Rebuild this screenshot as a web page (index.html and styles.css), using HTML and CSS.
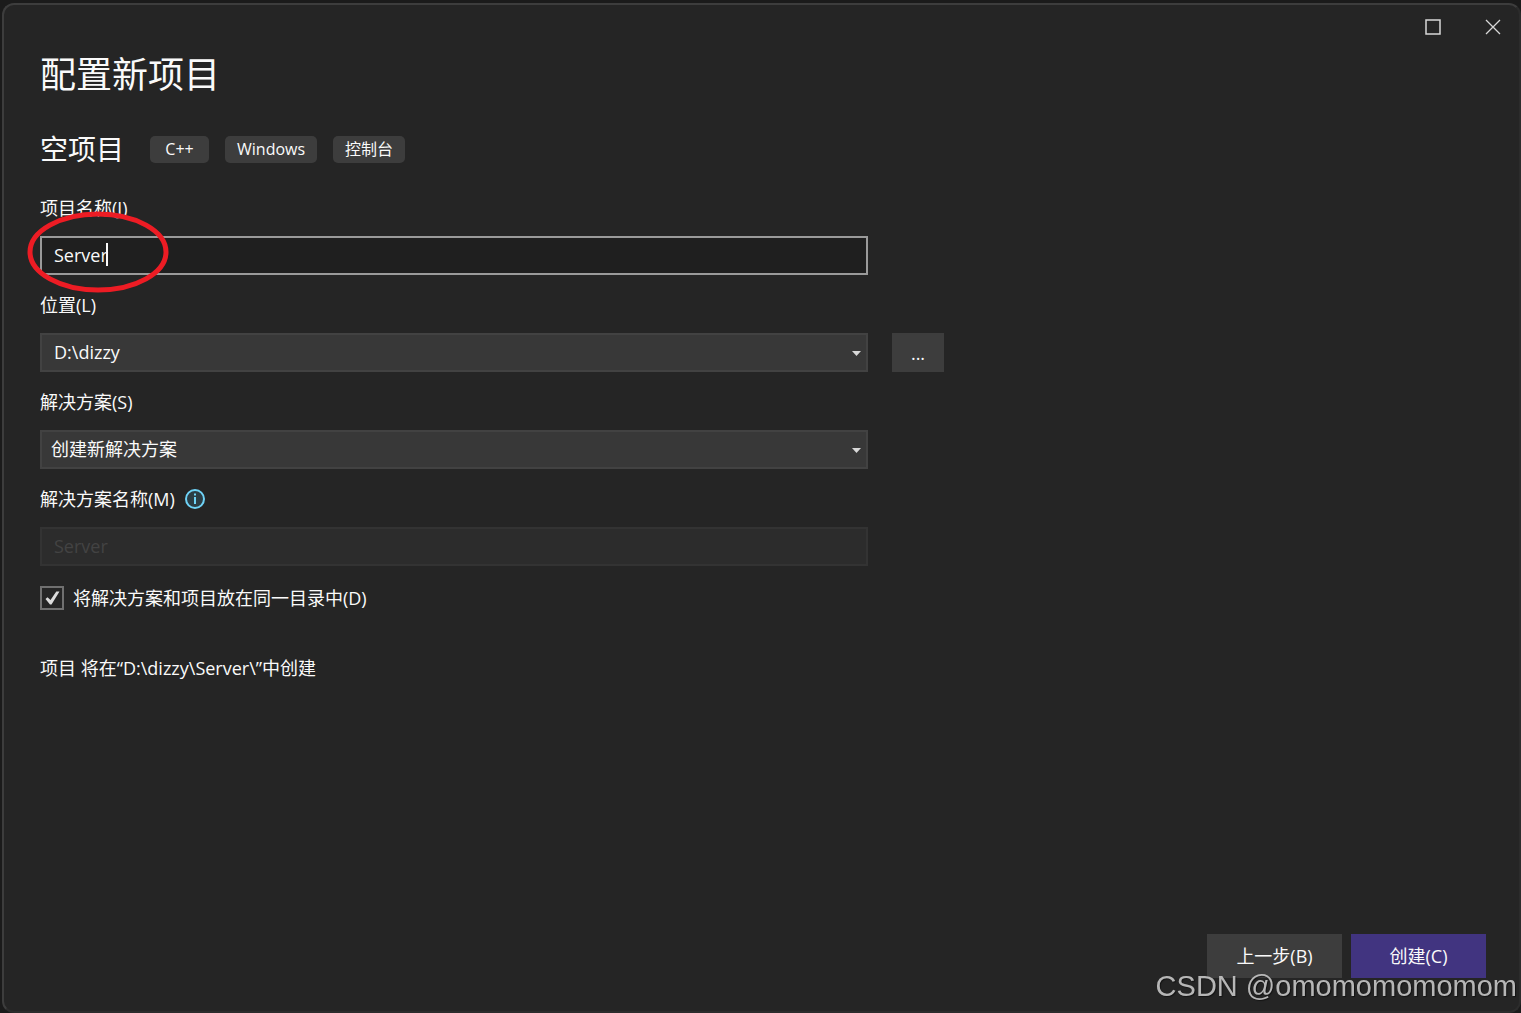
FILE: index.html
```
<!DOCTYPE html>
<html lang="zh-CN">
<head>
<meta charset="UTF-8" />
<meta name="viewport" content="width=device-width, initial-scale=1" />
<title>配置新项目</title>

<link rel="stylesheet" href="styles.css">
</head>
<body>

<div class="window">
    <!-- TITLE BAR -->
    <div class="titlebar">
        <button type="button" class="win-btn" aria-label="最大化">
            <svg width="16" height="16" viewBox="0 0 16 16"><rect x="1" y="1" width="14" height="14" fill="none" stroke="#d8d8d8" stroke-width="1.5"/></svg>
        </button>
        <button type="button" class="win-btn" aria-label="关闭">
            <svg width="16" height="16" viewBox="0 0 16 16"><path d="M1 1L15 15M15 1L1 15" fill="none" stroke="#d8d8d8" stroke-width="1.3"/></svg>
        </button>
    </div>

    <form class="content">
        <h1>配置新项目</h1>

        <div class="template">
            <h2>空项目</h2>
            <span class="tag">C++</span>
            <span class="tag">Windows</span>
            <span class="tag">控制台</span>
        </div>

        <!-- FIELDS -->
        <div class="field">
            <label for="name">项目名称(J)</label>
            <div class="control">
                <input type="text" id="name" class="box active" value="Server" />
                <span class="caret"></span>
                <svg class="mark" width="142" height="84" viewBox="0 0 142 84"><ellipse cx="71" cy="42" rx="68" ry="38" fill="none" stroke="#ed1c24" stroke-width="5"/></svg>
            </div>
        </div>

        <div class="field">
            <label for="location">位置(L)</label>
            <div class="row">
                <div class="control">
                    <select id="location" class="box"><option>D:\dizzy</option></select>
                    <svg class="arrow" width="9" height="5" viewBox="0 0 9 5"><path d="M0 0H9L4.500 5Z" fill="#d8d8d8"/></svg>
                </div>
                <button type="button" class="browse">...</button>
            </div>
        </div>

        <div class="field">
            <label for="solution">解决方案(S)</label>
            <div class="control">
                <select id="solution" class="box list"><option>创建新解决方案</option></select>
                <svg class="arrow" width="9" height="5" viewBox="0 0 9 5"><path d="M0 0H9L4.500 5Z" fill="#d8d8d8"/></svg>
            </div>
        </div>

        <div class="field">
            <div class="label-row">
                <label for="solution-name">解决方案名称(M)</label>
                <svg width="20" height="20" viewBox="0 0 20 20">
                    <circle cx="10" cy="10" r="9" fill="#2b3d45" stroke="#6fd3f7" stroke-width="2"/>
                    <path d="M9 4.500H11V6.500H9ZM9 8H11V15H9Z" fill="#6fd3f7"/>
                </svg>
            </div>
            <div class="control">
                <input type="text" id="solution-name" class="box" value="Server" disabled />
            </div>
        </div>

        <div class="check">
            <input type="checkbox" id="same-dir" checked />
            <svg class="tick" width="24" height="24" viewBox="0 0 24 24"><path d="M5.500 13L7.500 11.300L10.500 14L16.300 5.500H19.500L11.500 18.500H10Z" fill="#dcdcdc"/></svg>
            <label for="same-dir">将解决方案和项目放在同一目录中(D)</label>
        </div>

        <p class="summary">项目 将在“D:\dizzy\Server\”中创建</p>

        <div class="footer">
            <button type="button" class="btn">上一步(B)</button>
            <button type="submit" class="btn primary">创建(C)</button>
        </div>
    </form>
</div>

<div class="watermark">CSDN @omomomomomom</div>

</body>
</html>
```
FILE: styles.css
```
* { margin: 0; padding: 0; box-sizing: border-box; }

body {
    display: flex;
    min-height: 100vh;
    padding: 3px 0 0 2px;
    background: #1b1b1b;
    color: #fafafa;
    font-family: "Open Sans", "Noto Sans CJK SC", sans-serif;
    font-size: 18px;
    line-height: 24px;
}

input, select, button { font: inherit; color: inherit; }
svg { display: block; }

.window {
    flex: 1;
    display: flex;
    flex-direction: column;
    background: #252525;
    border: 2px solid #3d3d3d;
    border-right-color: #2c2c2c;
    border-bottom-color: #2c2c2c;
    border-radius: 12px;
}

.titlebar {
    display: flex;
    justify-content: flex-end;
    gap: 8px;
}

.win-btn {
    display: flex;
    align-items: center;
    justify-content: center;
    width: 52px;
    height: 44px;
    background: none;
    border: none;
}

.content {
    flex: 1;
    display: flex;
    flex-direction: column;
    padding: 2px 33px 33px 36px;
}

h1 {
    font-size: 36px;
    font-weight: normal;
    line-height: 48px;
}

.template {
    display: flex;
    align-items: center;
    gap: 16px;
    margin: 30px 0 27px;
}

h2 {
    margin-right: 10px;
    font-size: 28px;
    font-weight: normal;
    line-height: 40px;
}

.tag {
    min-width: 59px;
    padding: 0 12px;
    background: #3d3d3d;
    border-radius: 5px;
    font-size: 16px;
    line-height: 27px;
    text-align: center;
}

/* fields */
.field { margin-bottom: 18px; }

.field label { display: block; }

.label-row {
    display: flex;
    align-items: center;
    gap: 10px;
}

.control {
    position: relative;
    width: 100%;
    max-width: 828px;
    margin-top: 16px;
}

.row {
    display: flex;
    align-items: flex-end;
    gap: 24px;
}

.box {
    display: block;
    width: 100%;
    height: 39px;
    padding: 0 12px 2px;
    background: #383838;
    border: 2px solid #424242;
    border-radius: 0;
    outline: none;
    appearance: none;
}

.box.list { padding-left: 9px; }

.box.active {
    background: #1f1f1f;
    border-color: #9a9a9a;
}

.box:disabled {
    background: #2c2c2c;
    border-color: #333;
    color: #434343;
    opacity: 1;
}

.caret {
    position: absolute;
    left: 66px;
    top: 7px;
    width: 2px;
    height: 23px;
    background: #fafafa;
}

.mark {
    position: absolute;
    left: -13px;
    top: -26px;
    pointer-events: none;
}

.arrow {
    position: absolute;
    right: 7px;
    top: 18px;
    pointer-events: none;
}

.browse {
    flex: none;
    width: 52px;
    height: 39px;
    background: #3d3d3d;
    border: none;
}

/* checkbox */
.check {
    position: relative;
    display: flex;
    align-items: center;
    gap: 9px;
    margin-top: 2px;
}

.check input {
    width: 24px;
    height: 24px;
    border: 2px solid #707070;
    appearance: none;
}

.tick {
    display: none;
    position: absolute;
    left: 0;
    top: 0;
    pointer-events: none;
}

.check input:checked + .tick { display: block; }

.summary { margin-top: 46px; }

.footer {
    display: flex;
    justify-content: flex-end;
    gap: 9px;
    margin-top: auto;
}

.btn {
    width: 135px;
    height: 44px;
    background: #3d3d3d;
    border: none;
}

.btn.primary { background: #413480; }

.watermark {
    position: fixed;
    right: 4px;
    bottom: 10px;
    color: rgba(200, 200, 200, 0.9);
    font-family: "Liberation Sans", Arial, sans-serif;
    font-size: 29px;
    line-height: 34px;
    text-shadow: 1px 1px 1px rgba(0, 0, 0, 0.5);
}
```
